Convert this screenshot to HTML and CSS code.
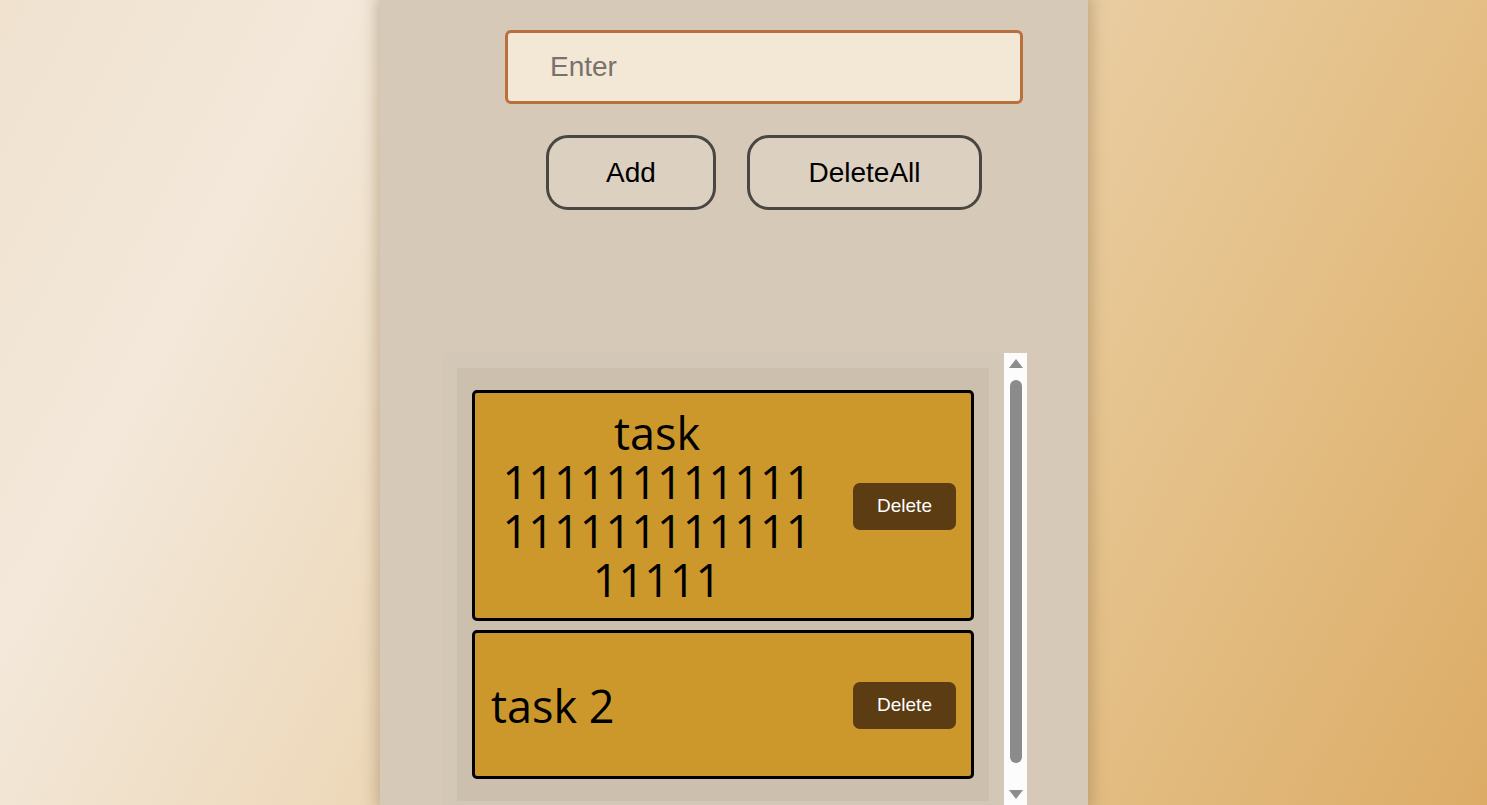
FILE: index.html
```html
<!DOCTYPE html>
<html lang="en">
<head>
<meta charset="utf-8">
<title>Todo</title>
<link rel="stylesheet" href="styles.css">
</head>
<body>
  <main class="panel">
    <input class="task-input" type="text" placeholder="Enter">
    <div class="actions">
      <button class="btn">Add</button>
      <button class="btn btn-wide">DeleteAll</button>
    </div>
    <section class="list-frame">
      <div class="list-scroll">
        <ul class="list">
          <li class="card">
            <p class="card-text">task 11111111111111111111111111111</p>
            <button class="del">Delete</button>
          </li>
          <li class="card">
            <p class="card-text">task 2</p>
            <button class="del">Delete</button>
          </li>
        </ul>
      </div>
      <div class="scrollbar">
        <span class="arrow arrow-up"></span>
        <span class="thumb"></span>
        <span class="arrow arrow-down"></span>
      </div>
    </section>
  </main>
</body>
</html>
```

FILE: styles.css
```css
* { box-sizing: border-box; }

html, body {
  margin: 0;
  height: 100%;
  overflow: hidden;
}

body {
  display: flex;
  font-family: "Liberation Sans", Arial, sans-serif;
  background: linear-gradient(118deg, #f0e2cf 0%, #f3e8da 18%, #ecd5b3 45%, #e6c48f 70%, #dcac66 100%);
}

.panel {
  width: 708px;
  height: 100%;
  margin-left: 380px;
  background: #d6c9b8;
  box-shadow: 0 0 14px 4px rgba(120, 95, 60, 0.35);
  display: flex;
  flex-direction: column;
  padding-top: 30px;
}

.task-input {
  width: 518px;
  height: 74px;
  margin-left: 125px;
  border: 3px solid #b8703c;
  border-radius: 6px;
  background: #f3e7d6;
  padding: 0 0 0 42px;
  font-family: "Liberation Sans", Arial, sans-serif;
  font-size: 28px;
  color: #333;
  outline: none;
}

.task-input::placeholder { color: #77726d; }

.actions {
  display: flex;
  gap: 31px;
  margin-top: 31px;
  margin-left: 166px;
}

.btn {
  width: 170px;
  height: 75px;
  border: 3px solid #4a4743;
  border-radius: 22px;
  background: #dcd0c1;
  font-family: "Liberation Sans", Arial, sans-serif;
  font-size: 28px;
  color: #000;
  padding: 0;
}

.btn-wide { width: 235px; }

.list-frame {
  display: flex;
  margin-top: 143px;
  margin-left: 63px;
  width: 584px;
  flex: 1;
  min-height: 0;
}

.list-scroll {
  flex: 1;
  background: #d3c8b7;
  padding: 15px 15px 15px 14px;
  overflow: hidden;
}

.list {
  list-style: none;
  margin: 0;
  padding: 22px 15px;
  background: #cdbfad;
  display: flex;
  flex-direction: column;
  gap: 9px;
}

.card {
  display: flex;
  align-items: center;
  justify-content: space-between;
  min-height: 149px;
  padding: 15px 15px 14px 16px;
  background: #cc982b;
  border: 3px solid #000;
  border-radius: 5px;
}

.card-text {
  flex: 0 1 auto;
  margin: 0 30px 0 0;
  font-family: "Open Sans", "Noto Sans", sans-serif;
  font-size: 45px;
  line-height: 49px;
  text-align: center;
  overflow-wrap: anywhere;
  color: #000;
}

.del {
  flex: none;
  width: 103px;
  height: 47px;
  border: none;
  border-radius: 7px;
  background: #5c3c13;
  color: #fff;
  font-family: "Liberation Sans", Arial, sans-serif;
  font-size: 19px;
  padding: 0;
}

.scrollbar {
  width: 23px;
  background: #fcfcfc;
  display: flex;
  flex-direction: column;
  align-items: center;
  padding: 6px 0 6px;
}

.arrow {
  width: 0;
  height: 0;
  border-left: 7px solid transparent;
  border-right: 7px solid transparent;
}

.arrow-up { border-bottom: 9px solid #8d8d8d; }
.arrow-down { border-top: 9px solid #8d8d8d; margin-top: auto; }

.thumb {
  width: 12px;
  height: 383px;
  margin-top: 12px;
  border-radius: 6px;
  background: #8b8b8b;
}
```
